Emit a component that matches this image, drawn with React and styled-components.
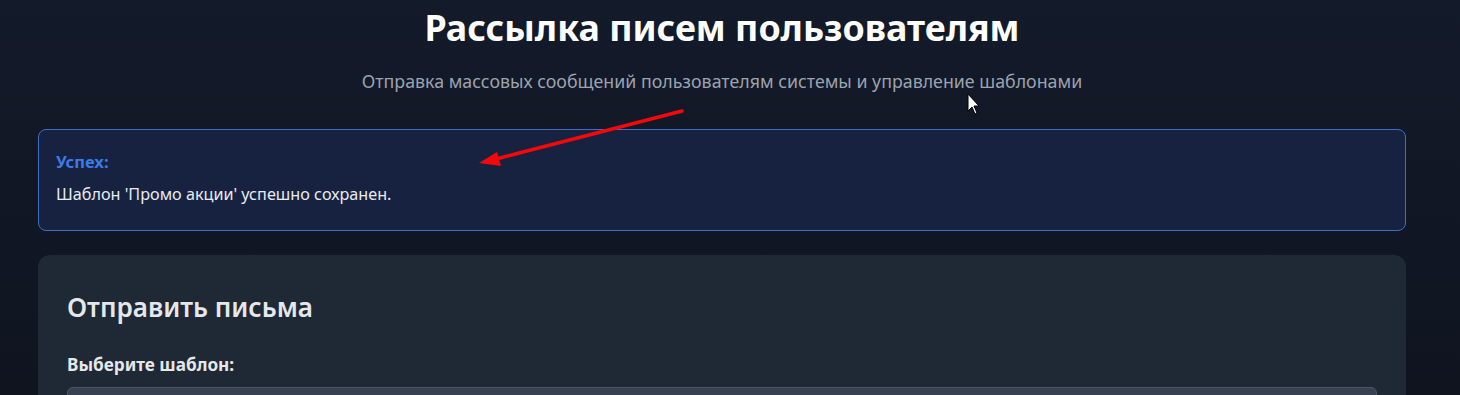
import React from "react";
import styled, { createGlobalStyle } from "styled-components";

const GlobalStyle = createGlobalStyle`
  html, body {
    margin: 0;
    padding: 0;
    height: 100%;
  }
  body {
    background: linear-gradient(180deg, #131a2a 0%, #0f141f 100%);
    font-family: "Noto Sans", "Open Sans", sans-serif;
    color: #e5e7eb;
    overflow: hidden;
  }
`;

const Page = styled.div`
  position: relative;
  height: 395px;
  padding: 0 54px 0 38px;
  overflow: hidden;
`;

const Header = styled.header`
  display: flex;
  flex-direction: column;
  align-items: center;
  padding-top: 4px;
`;

const Title = styled.h1`
  margin: 0;
  font-size: 35.8px;
  font-weight: 700;
  color: #ffffff;
  line-height: 46px;
`;

const Subtitle = styled.p`
  margin: 20px 0 0;
  font-size: 17.8px;
  color: #9ca3af;
  line-height: 22px;
`;

const Alert = styled.div`
  margin-top: 37px;
  height: 102px;
  box-sizing: border-box;
  padding: 21px 17px;
  background: #162240;
  border: 1px solid #3f6cc8;
  border-radius: 8px;
  display: flex;
  flex-direction: column;
  gap: 10px;
`;

const AlertTitle = styled.strong`
  font-size: 16.6px;
  font-weight: 700;
  color: #3d7be6;
  line-height: 22px;
`;

const AlertText = styled.span`
  font-size: 16.2px;
  color: #e8ebf0;
  line-height: 22px;
`;

const Card = styled.section`
  margin-top: 24px;
  background: #1f2835;
  border-radius: 12px;
  padding: 30px 29px 40px;
  height: 300px;
`;

const CardTitle = styled.h2`
  margin: 0;
  font-size: 26.1px;
  font-weight: 600;
  color: #e5e7eb;
  line-height: 44px;
`;

const Label = styled.label`
  display: block;
  margin-top: 25px;
  font-size: 17.2px;
  font-weight: 700;
  color: #e5e7eb;
  line-height: 22px;
`;

const Select = styled.div`
  margin-top: 11px;
  height: 44px;
  background: #374151;
  border: 1px solid #4b5563;
  border-radius: 6px;
`;

const Overlay = styled.svg`
  position: absolute;
  left: 0;
  top: 0;
  pointer-events: none;
`;

export default function App() {
  return (
    <>
      <GlobalStyle />
      <Page>
        <Header>
          <Title>Рассылка писем пользователям</Title>
          <Subtitle>Отправка массовых сообщений пользователям системы и управление шаблонами</Subtitle>
        </Header>
        <Alert>
          <AlertTitle>Успех:</AlertTitle>
          <AlertText>Шаблон 'Промо акции' успешно сохранен.</AlertText>
        </Alert>
        <Card>
          <CardTitle>Отправить письма</CardTitle>
          <Label>Выберите шаблон:</Label>
          <Select />
        </Card>
        <Overlay width="1460" height="395">
          <line x1="682" y1="111" x2="496" y2="159" stroke="#f5080a" strokeWidth="3.5" strokeLinecap="round" />
          <polygon points="479,163 497,152 501,166" fill="#f5080a" />
          <path d="M968 94 L968 111 L972 107 L975 114 L977 113 L974 106 L979 106 Z" fill="#ffffff" stroke="#000" strokeWidth="1" />
        </Overlay>
      </Page>
    </>
  );
}
